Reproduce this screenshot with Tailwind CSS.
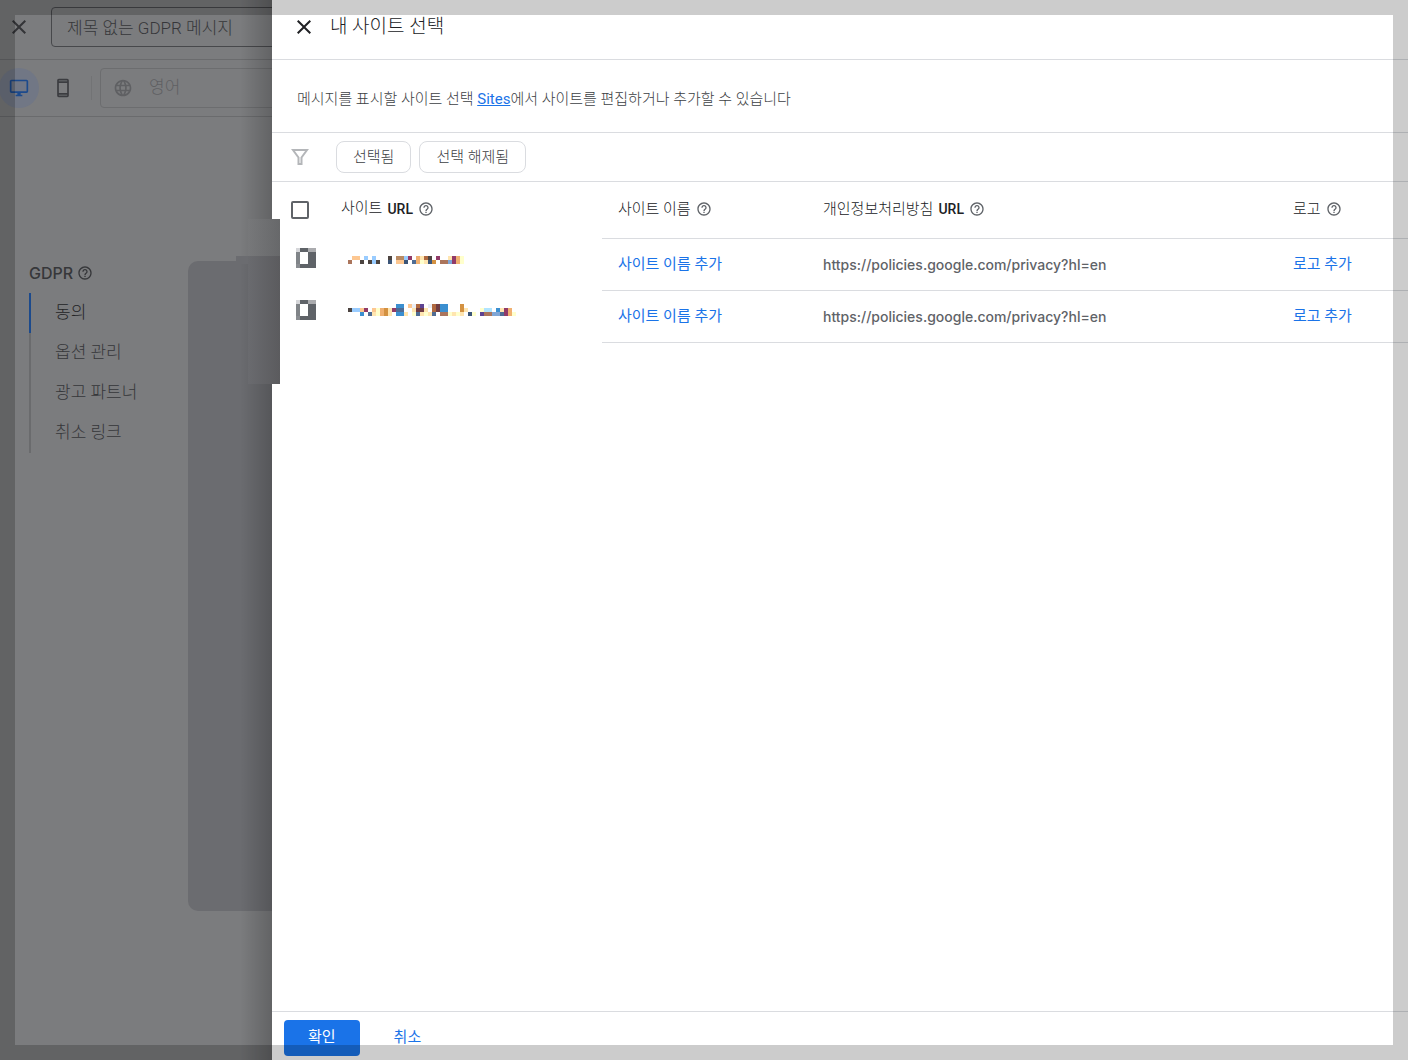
<!DOCTYPE html>
<html lang="ko">
<head>
<meta charset="utf-8">
<meta name="viewport" content="width=device-width, initial-scale=1">
<title>내 사이트 선택</title>
<script src="https://cdn.jsdelivr.net/npm/@tailwindcss/browser@4"></script>
</head>
<body class="relative flex h-screen overflow-hidden bg-white font-['Roboto','Noto_Sans_CJK_KR',sans-serif] text-[15px] font-light text-[#3c4043]">

<svg class="hidden" aria-hidden="true">
  <symbol id="help" viewBox="0 0 24 24"><path fill="currentColor" d="M11 18h2v-2h-2v2zm1-16C6.480 2 2 6.480 2 12s4.480 10 10 10 10-4.480 10-10S17.520 2 12 2zm0 18c-4.410 0-8-3.590-8-8s3.590-8 8-8 8 3.590 8 8-3.590 8-8 8zm0-14c-2.210 0-4 1.790-4 4h2c0-1.100.9-2 2-2s2 .9 2 2c0 2-3 1.750-3 5h2c0-2.250 3-2.500 3-5 0-2.210-1.790-4-4-4z"/></symbol>
  <symbol id="close" viewBox="0 0 24 24"><path fill="currentColor" d="M19 6.410 17.590 5 12 10.590 6.410 5 5 6.410 10.590 12 5 17.590 6.410 19 12 13.410 17.590 19 19 17.590 13.410 12z"/></symbol>
  <symbol id="favicon" viewBox="0 0 5 5" shape-rendering="crispEdges">
    <path fill="#5f6368" d="M0 0h5v5H0z"/><path fill="#d5d6d9" d="M0 0h1v1H0z"/><path fill="#aaabae" d="M3 0h2v1H3z"/><path fill="#808488" d="M0 1h1v3H0z"/><path fill="#8a8d91" d="M0 4h1v1H0z"/><path fill="#fff" d="M1 1h2v3H1z"/>
  </symbol>
</svg>

<!-- Dimmed message editor behind the drawer -->
<aside class="relative flex w-[272px] shrink-0 flex-col overflow-hidden bg-[#7b7c7e] text-[17px] text-[#36373a]">
  <header class="flex h-[60px] shrink-0 items-center border-b border-[#6a6b6d] pb-1.5">
    <button type="button" aria-label="닫기" class="ml-[7px] shrink-0 text-[#333437]"><svg class="size-6"><use href="#close"/></svg></button>
    <input type="text" aria-label="메시지 이름" value="제목 없는 GDPR 메시지" class="ml-5 h-10 w-80 shrink-0 rounded border border-[#47484b] px-[15px]">
  </header>
  <div class="flex h-[57px] shrink-0 items-center border-b border-[#6a6b6d]">
    <button type="button" aria-label="데스크톱" class="-ml-px flex size-10 shrink-0 items-center justify-center rounded-full bg-[#717785] text-[#1c4a8c]">
      <svg class="size-5" viewBox="0 0 24 24" fill="currentColor"><path d="M21 2H3c-1.100 0-2 .9-2 2v12c0 1.100.9 2 2 2h7v2H8v2h8v-2h-2v-2h7c1.100 0 2-.9 2-2V4c0-1.100-.9-2-2-2zm0 14H3V4h18v12z"/></svg>
    </button>
    <button type="button" aria-label="모바일" class="ml-[14px] shrink-0 text-[#3b3c40]">
      <svg class="size-5" viewBox="0 0 24 24" fill="currentColor"><path d="M17 1H7C5.900 1 5 1.900 5 3v18c0 1.100.9 2 2 2h10c1.100 0 2-.9 2-2V3c0-1.100-.9-2-2-2zm0 20H7v-1h10v1zm0-3H7V6h10v12zm0-14H7V3h10v1z"/></svg>
    </button>
    <div class="ml-[18px] h-6 w-px shrink-0 bg-[#727375]"></div>
    <button type="button" class="ml-2 flex h-10 w-80 shrink-0 items-center gap-4 rounded border border-[#6c6d6f] pl-3 text-[#5f6063]">
      <svg class="size-5" viewBox="0 0 24 24" fill="currentColor"><path d="M11.990 2C6.470 2 2 6.480 2 12s4.470 10 9.990 10C17.520 22 22 17.520 22 12S17.520 2 11.990 2zm6.930 6h-2.950a15.650 15.650 0 0 0-1.380-3.560A8.030 8.030 0 0 1 18.920 8zM12 4.040c.83 1.200 1.480 2.530 1.910 3.960h-3.820c.43-1.430 1.080-2.760 1.910-3.960zM4.260 14C4.100 13.360 4 12.690 4 12s.1-1.360.26-2h3.380c-.08.66-.14 1.320-.14 2s.06 1.340.14 2H4.260zm.82 2h2.950c.32 1.250.78 2.450 1.380 3.560A7.987 7.987 0 0 1 5.080 16zm2.950-8H5.080a7.987 7.987 0 0 1 4.330-3.560A15.650 15.650 0 0 0 8.030 8zM12 19.960c-.83-1.200-1.480-2.530-1.910-3.960h3.820c-.43 1.430-1.080 2.760-1.910 3.960zM14.340 14H9.660c-.09-.66-.16-1.320-.16-2s.07-1.350.16-2h4.680c.09.65.16 1.320.16 2s-.07 1.340-.16 2zm.25 5.560c.6-1.110 1.060-2.310 1.380-3.560h2.950a8.030 8.030 0 0 1-4.330 3.560zM16.360 14c.08-.66.14-1.320.14-2s-.06-1.340-.14-2h3.380c.16.64.26 1.310.26 2s-.1 1.360-.26 2h-3.380z"/></svg>
      <span>영어</span>
    </button>
  </div>
  <div class="flex flex-1 pt-36">
    <nav class="w-[188px] shrink-0 pl-[29px]">
      <h2 class="flex h-6 items-center gap-1 font-['Inter'] text-base font-medium">GDPR <svg class="size-4"><use href="#help"/></svg></h2>
      <ul class="mt-2">
        <li><a href="#" class="flex h-10 items-center border-l-2 border-[#1c4a8c] pl-6 text-[#232426]">동의</a></li>
        <li><a href="#" class="flex h-10 items-center border-l-2 border-[#6a6b6d] pl-6">옵션 관리</a></li>
        <li><a href="#" class="flex h-10 items-center border-l-2 border-[#6a6b6d] pl-6">광고 파트너</a></li>
        <li><a href="#" class="flex h-10 items-center border-l-2 border-[#6a6b6d] pl-6">취소 링크</a></li>
      </ul>
    </nav>
    <div class="h-[650px] flex-1 rounded-l-[10px] bg-[#6b6c70]"></div>
  </div>
  <div class="absolute inset-y-0 right-0 w-8 bg-linear-to-r from-black/0 to-black/20"></div>
</aside>

<!-- Site picker drawer -->
<main class="flex min-w-0 flex-1 flex-col bg-white">
  <header class="flex h-[60px] shrink-0 items-center gap-[14px] border-b border-[#dadce0] pb-1.5 pl-5 text-[#202124]">
    <button type="button" aria-label="닫기"><svg class="size-6"><use href="#close"/></svg></button>
    <h1 class="text-[19px] leading-6">내 사이트 선택</h1>
  </header>
  <p class="flex h-[73px] shrink-0 items-center border-b border-[#dadce0] pl-[25px] pt-1.5">
    <span>메시지를 표시할 사이트 선택 <a href="#" class="font-normal text-[#1a73e8] underline">Sites</a>에서 사이트를 편집하거나 추가할 수 있습니다</span>
  </p>
  <div class="flex h-[49px] shrink-0 items-center gap-2 border-b border-[#dadce0] pl-[18px]">
    <svg class="mr-[18px] size-5 shrink-0 text-[#b4b6b9]" viewBox="0 0 20 20" fill="none" stroke="currentColor" stroke-width="2"><path d="M3 3h14l-5.500 7.500V17h-3v-6.500z"/></svg>
    <button type="button" class="h-8 rounded-lg border border-[#dadce0] px-4 leading-7">선택됨</button>
    <button type="button" class="h-8 rounded-lg border border-[#dadce0] px-4 leading-7">선택 해제됨</button>
  </div>
  <div class="flex-1 overflow-auto">
    <table class="w-full table-fixed border-separate border-spacing-0 text-left">
      <colgroup><col class="w-[69px]"><col class="w-[261px]"><col class="w-[205px]"><col><col class="w-[131px]"></colgroup>
      <thead>
        <tr class="h-[57px] text-[#202124]">
          <th class="pb-0.5 pl-[19px]"><input type="checkbox" aria-label="모든 사이트 선택" class="block size-[18px] appearance-none rounded-xs border-2 border-[#5f6368]"></th>
          <th class="pb-1 font-light"><span class="flex items-center gap-[5px]">사이트 <b class="text-sm font-medium">URL</b><svg class="size-4 text-[#5f6368]"><use href="#help"/></svg></span></th>
          <th class="border-b border-[#dadce0] pb-0.5 pl-4 font-light"><span class="flex items-center gap-[5px]">사이트 이름<svg class="size-4 text-[#5f6368]"><use href="#help"/></svg></span></th>
          <th class="border-b border-[#dadce0] pb-0.5 pl-4 font-light"><span class="flex items-center gap-[5px]">개인정보처리방침 <b class="text-sm font-medium">URL</b><svg class="size-4 text-[#5f6368]"><use href="#help"/></svg></span></th>
          <th class="border-b border-[#dadce0] pb-0.5 pl-4 font-light"><span class="flex items-center gap-[5px]">로고<svg class="size-4 text-[#5f6368]"><use href="#help"/></svg></span></th>
        </tr>
      </thead>
      <tbody>
        <tr class="h-[52px]">
          <td class="pb-[14px] pl-6"><svg class="block size-5"><use href="#favicon"/></svg></td>
          <td class="pb-[14px] pl-[7px]"><svg data-mosaic="0" class="block h-3 w-[168px]" viewBox="0 0 42 3" shape-rendering="crispEdges" role="img" aria-label="가려진 주소"></svg></td>
          <td class="border-b border-[#dadce0] pl-4 font-normal text-[#1a73e8]"><a href="#">사이트 이름 추가</a></td>
          <td class="truncate border-b border-[#dadce0] pl-4 font-['Inter'] text-sm font-medium text-[#5f6368]">https://policies.google.com/privacy?hl=en</td>
          <td class="border-b border-[#dadce0] pl-4 font-normal text-[#1a73e8]"><a href="#">로고 추가</a></td>
        </tr>
        <tr class="h-[52px]">
          <td class="pb-[14px] pl-6"><svg class="block size-5"><use href="#favicon"/></svg></td>
          <td class="pb-[14px] pl-[7px]"><svg data-mosaic="1" class="block h-3 w-[168px]" viewBox="0 0 42 3" shape-rendering="crispEdges" role="img" aria-label="가려진 주소"></svg></td>
          <td class="border-b border-[#dadce0] pl-4 font-normal text-[#1a73e8]"><a href="#">사이트 이름 추가</a></td>
          <td class="truncate border-b border-[#dadce0] pl-4 font-['Inter'] text-sm font-medium text-[#5f6368]">https://policies.google.com/privacy?hl=en</td>
          <td class="border-b border-[#dadce0] pl-4 font-normal text-[#1a73e8]"><a href="#">로고 추가</a></td>
        </tr>
      </tbody>
    </table>
  </div>
  <footer class="flex h-[49px] shrink-0 items-center border-t border-[#dadce0] pl-3 pt-1">
    <button type="button" class="h-9 rounded bg-[#1a73e8] px-6 pb-0.5 font-normal text-white">확인</button>
    <button type="button" class="ml-[34px] pb-0.5 font-normal text-[#1a73e8]">취소</button>
  </footer>
</main>

<!-- Pixelated strip spilling over the drawer edge -->
<div class="absolute left-[248px] top-[219px] flex h-[165px] w-8 flex-col">
  <div class="h-[37px] bg-linear-to-r from-[#77787a] to-[#67686a]"></div>
  <div class="flex-1 bg-linear-to-r from-[#6a6b6f] to-[#5b5b5e]"></div>
</div>
<div class="absolute left-[236px] top-[256px] h-2 w-3 bg-[#6b6c70]"></div>

<!-- Translucent frame round the window -->
<div class="pointer-events-none absolute inset-0 border-[15px] border-black/20"></div>

<script>
  // One letter per 4px cell; a dot leaves the cell empty.
  const colours = {a:'#ab755c',o:'#fdc791',b:'#99ccff',k:'#4c4440',n:'#3b5578',t:'#b98a62',p:'#913a68',g:'#f0b070',y:'#ffffcc',c:'#ffe5b0',r:'#b0693f',s:'#4f6c94',u:'#3b8fd0',d:'#d39141',m:'#703c42',v:'#5d4392',l:'#ebeef5',e:'#b0e4ff',w:'#7fa6d6'};
  const mosaics = [
    ['', '.oo.b.b...k.ttbp.gcrk.p..cpgy', 'a..k.kbk..n.oon.sgycnd.aawpgy'],
    ['............uu.olrv.lrmuu...d', 'kbbop.oygdcpss..cmmc.rmuu...dc...yee.ucpg.', '...u.scygdc.uuc.yscycs.aaycyc.ny.vaawwspgy']
  ];
  document.querySelectorAll('[data-mosaic]').forEach(svg => {
    mosaics[svg.dataset.mosaic].forEach((row, y) => [...row].forEach((key, x) => {
      if (!colours[key]) return;
      const cell = document.createElementNS('http://www.w3.org/2000/svg', 'rect');
      Object.entries({x, y, width: 1, height: 1, fill: colours[key]}).forEach(([k, v]) => cell.setAttribute(k, v));
      svg.append(cell);
    }));
  });
</script>
</body>
</html>
